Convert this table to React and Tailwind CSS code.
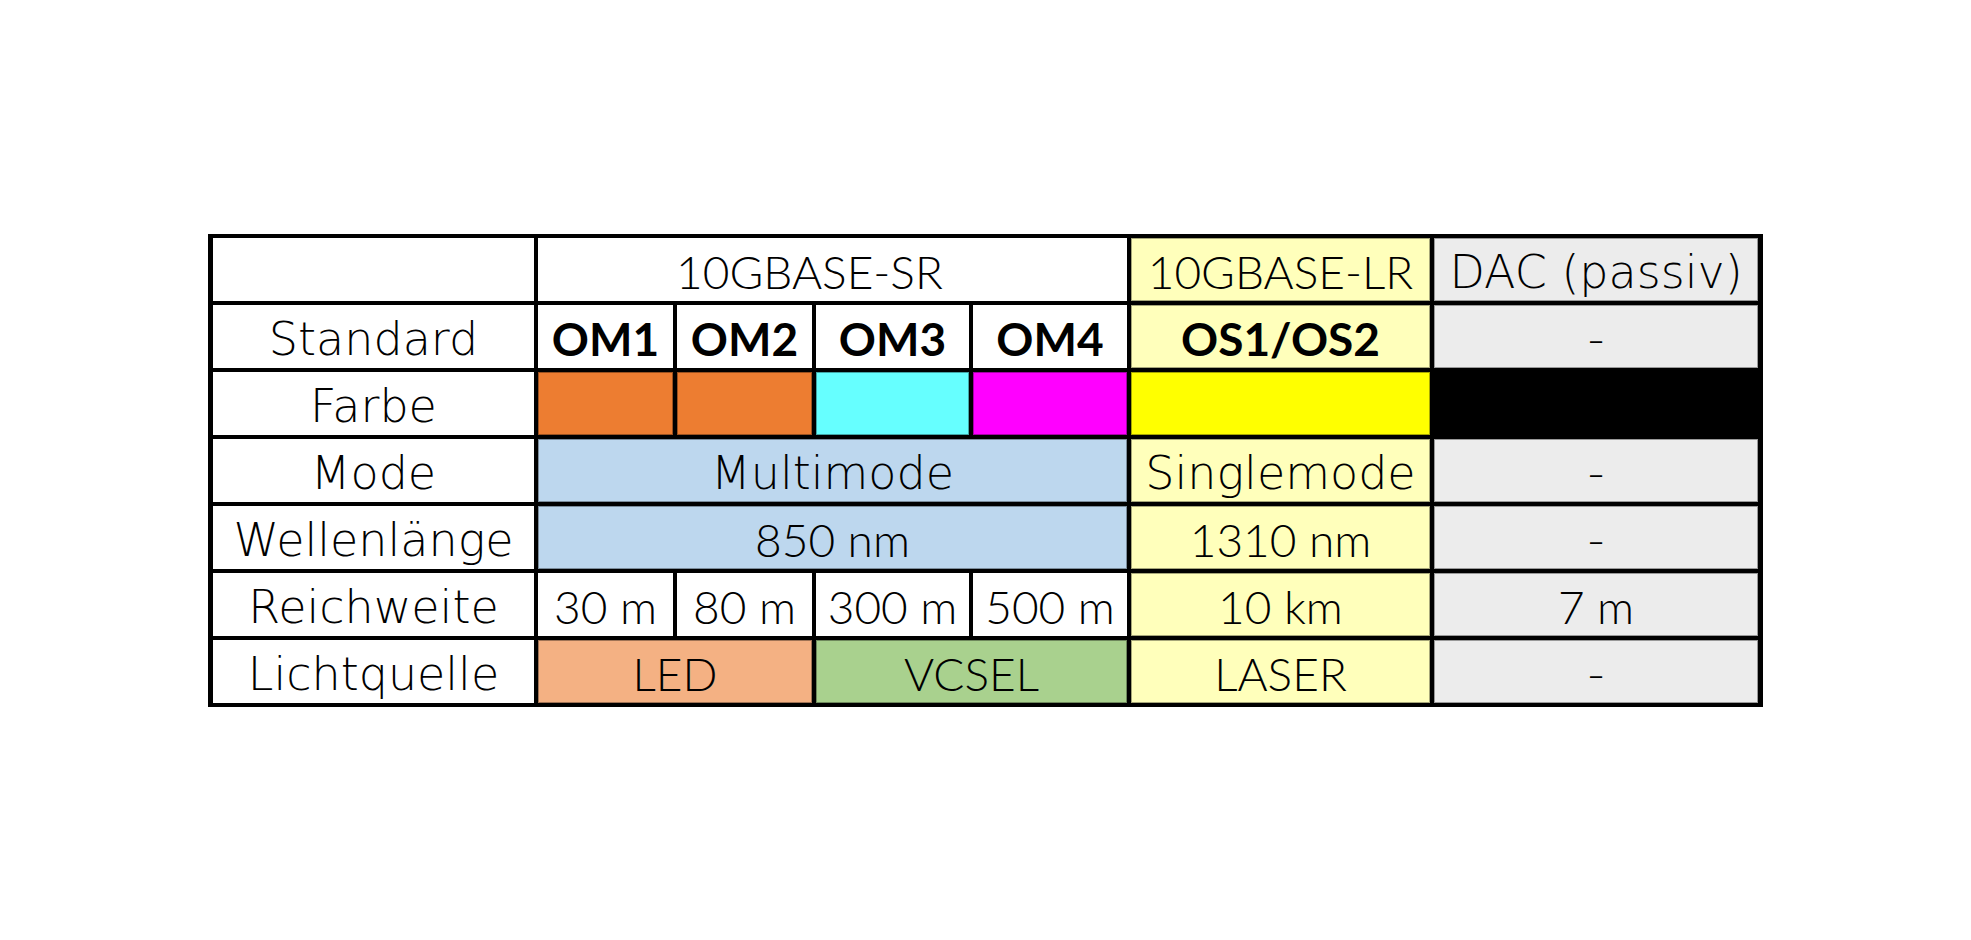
import React from "react";

const cell = "flex items-center justify-center leading-none pt-[6px]";
const edge = "shadow-[inset_0_0_0_1px_rgba(0,0,0,0.35)]";
const bold = "font-['Lato',sans-serif] font-bold";
// digits and capitals come out narrower in Lato, closer to the original
const num = "font-['Lato',sans-serif] font-light";

const App = () => {
  return (
    <div className="w-full h-[940px] bg-white flex items-center justify-center font-['DejaVu_Sans',sans-serif] font-extralight text-black text-[46px]">
      <div className="grid grid-cols-[321px_135px_135px_153px_154px_299px_324px] grid-rows-[repeat(7,63px)] gap-[4px] bg-black pt-[4px] pb-[4px] px-[5px]">
        {/* header */}
        <div className="bg-white" />
        <div className={`${cell} ${num} col-span-4 bg-white pr-[46px]`}>10GBASE-SR</div>
        <div className={`${cell} ${num} ${edge} bg-[#ffffbb]`}>10GBASE-LR</div>
        <div className={`${cell} ${edge} bg-[#ececec]`}>DAC (passiv)</div>

        {/* Standard */}
        <div className={`${cell} bg-white`}>Standard</div>
        <div className={`${cell} ${bold} bg-white`}>OM1</div>
        <div className={`${cell} ${bold} bg-white`}>OM2</div>
        <div className={`${cell} ${bold} bg-white`}>OM3</div>
        <div className={`${cell} ${bold} bg-white`}>OM4</div>
        <div className={`${cell} ${bold} ${edge} bg-[#ffffbb]`}>OS1/OS2</div>
        <div className={`${cell} ${edge} bg-[#ececec]`}>-</div>

        {/* Farbe */}
        <div className={`${cell} bg-white`}>Farbe</div>
        <div className={`${edge} bg-[#ed7d31]`} />
        <div className={`${edge} bg-[#ed7d31]`} />
        <div className={`${edge} bg-[#66ffff]`} />
        <div className={`${edge} bg-[#ff00ff]`} />
        <div className={`${edge} bg-[#ffff00]`} />
        <div className="bg-black" />

        {/* Mode */}
        <div className={`${cell} bg-white`}>Mode</div>
        <div className={`${cell} ${edge} col-span-4 bg-[#bdd7ee]`}>Multimode</div>
        <div className={`${cell} ${edge} bg-[#ffffbb]`}>Singlemode</div>
        <div className={`${cell} ${edge} bg-[#ececec]`}>-</div>

        {/* Wellenlänge */}
        <div className={`${cell} bg-white`}>Wellenlänge</div>
        <div className={`${cell} ${num} ${edge} col-span-4 bg-[#bdd7ee]`}>850 nm</div>
        <div className={`${cell} ${num} ${edge} bg-[#ffffbb]`}>1310 nm</div>
        <div className={`${cell} ${edge} bg-[#ececec]`}>-</div>

        {/* Reichweite */}
        <div className={`${cell} bg-white`}>Reichweite</div>
        <div className={`${cell} ${num} bg-white`}>30 m</div>
        <div className={`${cell} ${num} bg-white`}>80 m</div>
        <div className={`${cell} ${num} bg-white`}>300 m</div>
        <div className={`${cell} ${num} bg-white`}>500 m</div>
        <div className={`${cell} ${num} ${edge} bg-[#ffffbb]`}>10 km</div>
        <div className={`${cell} ${num} ${edge} bg-[#ececec]`}>7 m</div>

        {/* Lichtquelle */}
        <div className={`${cell} bg-white`}>Lichtquelle</div>
        <div className={`${cell} ${num} ${edge} col-span-2 bg-[#f4b183]`}>LED</div>
        <div className={`${cell} ${num} ${edge} col-span-2 bg-[#a9d18e]`}>VCSEL</div>
        <div className={`${cell} ${num} ${edge} bg-[#ffffbb]`}>LASER</div>
        <div className={`${cell} ${edge} bg-[#ececec]`}>-</div>
      </div>
    </div>
  );
};

export default App;
